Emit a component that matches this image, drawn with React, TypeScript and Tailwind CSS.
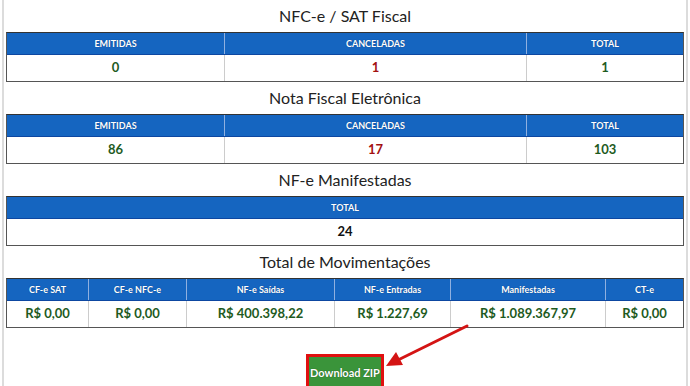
import React from 'react';

type Col = { label: string; value: string; color: string; w: string };

function StatTable({ cols }: { cols: Col[] }) {
  return (
    <div className="border border-[#555] border-t-[#333]">
      <div className="flex bg-[#1565c0] border-b border-[#0d47a1]">
        {cols.map((c, i) => (
          <div
            key={i}
            className={`${c.w} h-[21px] flex items-center justify-center text-[9px] font-bold text-white [text-shadow:0_0_1px_#0b3c7a] ${i > 0 ? 'border-l border-[#8fb0e0]' : ''}`}
          >
            {c.label}
          </div>
        ))}
      </div>
      <div className="flex bg-white">
        {cols.map((c, i) => (
          <div
            key={i}
            className={`${c.w} h-[26px] flex items-center justify-center text-[13px] font-bold ${c.color} ${i > 0 ? 'border-l border-[#ccc]' : ''}`}
          >
            {c.value}
          </div>
        ))}
      </div>
    </div>
  );
}

function Title({ children }: { children: React.ReactNode }) {
  return <h2 className="h-[32px] flex items-center justify-center text-[16px] text-[#222]">{children}</h2>;
}

const green = 'text-[#1e5b1e]';
const red = 'text-[#a31010]';

export default function App() {
  return (
    <div className="relative w-[690px] h-[386px] overflow-hidden bg-white font-['Lato','Liberation_Sans',sans-serif]">
      <div className="mx-[2px] h-full border-x-2 border-[#dcdcdc] px-[2px]">
        <Title>NFC-e / SAT Fiscal</Title>
        <StatTable
          cols={[
            { label: 'EMITIDAS', value: '0', color: green, w: 'w-[217px]' },
            { label: 'CANCELADAS', value: '1', color: red, w: 'w-[302px]' },
            { label: 'TOTAL', value: '1', color: green, w: 'flex-1' },
          ]}
        />
        <Title>Nota Fiscal Eletrônica</Title>
        <StatTable
          cols={[
            { label: 'EMITIDAS', value: '86', color: green, w: 'w-[217px]' },
            { label: 'CANCELADAS', value: '17', color: red, w: 'w-[302px]' },
            { label: 'TOTAL', value: '103', color: green, w: 'flex-1' },
          ]}
        />
        <Title>NF-e Manifestadas</Title>
        <StatTable cols={[{ label: 'TOTAL', value: '24', color: 'text-[#111]', w: 'flex-1' }]} />
        <Title>Total de Movimentações</Title>
        <StatTable
          cols={[
            { label: 'CF-e SAT', value: 'R$ 0,00', color: green, w: 'w-[81px]' },
            { label: 'CF-e NFC-e', value: 'R$ 0,00', color: green, w: 'w-[98px]' },
            { label: 'NF-e Saídas', value: 'R$ 400.398,22', color: green, w: 'w-[148px]' },
            { label: 'NF-e Entradas', value: 'R$ 1.227,69', color: green, w: 'w-[116px]' },
            { label: 'Manifestadas', value: 'R$ 1.089.367,97', color: green, w: 'w-[155px]' },
            { label: 'CT-e', value: 'R$ 0,00', color: green, w: 'flex-1' },
          ]}
        />
        <div className="flex justify-center pt-[26px]">
          <button className="w-[78px] h-[38px] border-[3px] border-[#e01010] bg-[#3a943a] text-white text-[11px] font-bold [text-shadow:0_0_1px_#1a4a1a]">
            Download ZIP
          </button>
        </div>
      </div>
      <svg className="absolute left-0 top-0 pointer-events-none" width="690" height="386">
        <line x1="467" y1="326" x2="398" y2="360" stroke="#d41414" strokeWidth="3" strokeLinecap="round" />
        <polygon points="386,366 396,352 403,365" fill="#d41414" />
      </svg>
    </div>
  );
}
